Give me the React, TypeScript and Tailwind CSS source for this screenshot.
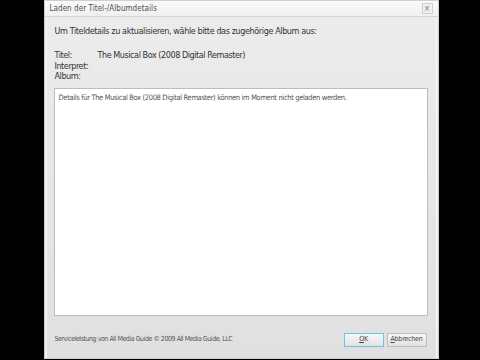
export default function App() {
  const font = { fontFamily: '"DejaVu Sans Condensed", "DejaVu Sans", sans-serif' };
  return (
    <div className="w-[480px] h-[360px] bg-black flex justify-center overflow-hidden" style={font}>
      <div className="w-[395px] h-[359px] ml-[2px] flex flex-col bg-[#e9e9e9] border border-[#cfcfcf]">
        <div className="h-[16px] shrink-0 flex items-center justify-between pl-[5px] pr-[5px] bg-gradient-to-b from-[#fafafa] to-[#efefef] border-b border-[#d6d6d6]">
          <span className="text-[8px] tracking-[0.05px] text-[#505050] leading-none">Laden der Titel-/Albumdetails</span>
          <div className="w-[11px] h-[11px] border border-[#d0d0d0] bg-[#f0f0f0] flex items-center justify-center text-[8px] text-[#777] leading-none">×</div>
        </div>
        <div className="flex-1 flex flex-col mx-[1px] border-l border-r border-[#f6f6f6] bg-gradient-to-b from-[#ececec] to-[#e0e0e0]">
          <div className="pl-[8px] pt-[8px] text-[9px] tracking-[-0.4px] leading-[12px] text-[#333]">
            Um Titeldetails zu aktualisieren, wähle bitte das zugehörige Album aus:
          </div>
          <div className="pl-[8px] pt-[13px] text-[9px] tracking-[-0.45px] leading-[10.5px] text-[#333] grid grid-cols-[43px_1fr]">
            <span>Titel:</span>
            <span>The Musical Box (2008 Digital Remaster)</span>
            <span>Interpret:</span>
            <span></span>
            <span>Album:</span>
            <span></span>
          </div>
          <div className="ml-[7px] mr-[8px] mt-[6px] h-[228px] bg-white border border-[#bdbdbd] pl-[4px] pt-[4px] text-[7.5px] tracking-[-0.35px] leading-[10px] text-[#555]">
            Details für The Musical Box (2008 Digital Remaster) können im Moment nicht geladen werden.
          </div>
          <div className="flex items-center justify-between pl-[8px] pr-[9px] mt-[17px]">
            <span className="text-[7px] tracking-[-0.45px] text-[#555]">Servicelelstung von All Media Guide © 2009 All Media Guide, LLC</span>
            <div className="flex gap-[3px]">
              <div className="w-[40px] h-[14px] border border-[#6cc3e3] bg-gradient-to-b from-[#f7f7f7] to-[#e2e2e2] flex items-center justify-center text-[7px] tracking-[-0.2px] text-[#444]"><span className="underline">O</span>K</div>
              <div className="w-[40px] h-[14px] border border-[#bdbdbd] bg-gradient-to-b from-[#f7f7f7] to-[#e2e2e2] flex items-center justify-center text-[7px] tracking-[-0.2px] text-[#444]"><span className="underline">A</span>bbrechen</div>
            </div>
          </div>
        </div>
      </div>
    </div>
  );
}
